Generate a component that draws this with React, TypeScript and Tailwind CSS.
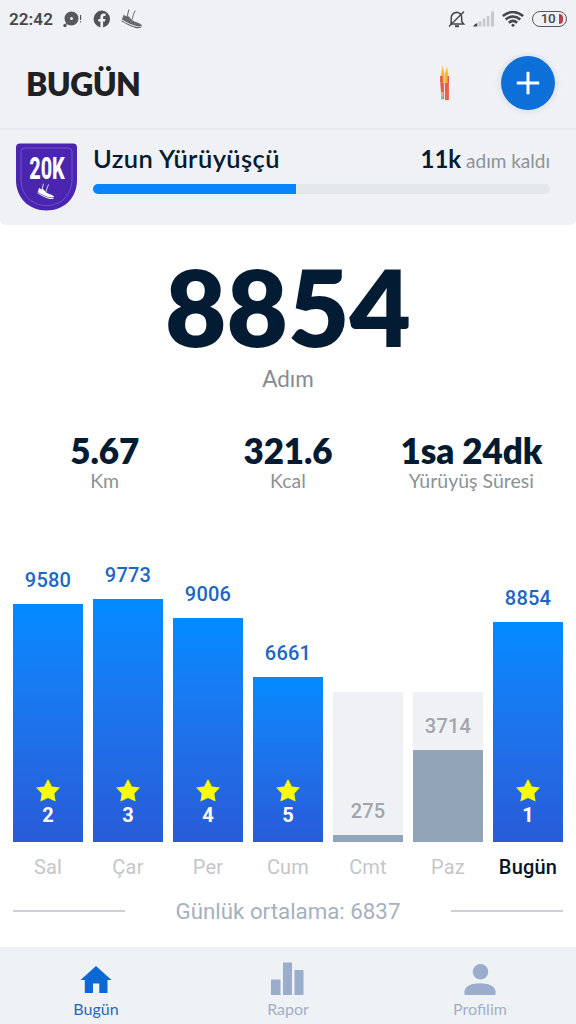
const DAILY_GOAL = 6000
const PX_PER_STEP = 0.02482

const stats = [
  { value: "5.67", label: "Km" },
  { value: "321.6", label: "Kcal" },
  { value: "1sa 24dk", label: "Yürüyüş Süresi" },
]

const days = [
  { name: "Sal", steps: 9580, streak: 2 },
  { name: "Çar", steps: 9773, streak: 3 },
  { name: "Per", steps: 9006, streak: 4 },
  { name: "Cum", steps: 6661, streak: 5 },
  { name: "Cmt", steps: 275 },
  { name: "Paz", steps: 3714 },
  { name: "Bugün", steps: 8854, streak: 1, today: true },
]

type Day = { name: string; steps: number; streak?: number; today?: boolean }

function Shoe({ className }: { className: string }) {
  return (
    <svg viewBox="0 0 22 20" className={className} fill="currentColor">
      <path d="M2.8 5.5 C4.5 7.4 6.4 7.8 7.8 7.2 C9.8 10 12 12.2 15 13 C17.7 13.8 20.3 14.8 21 16.8 L17.2 17.4 C11.5 16.4 6 13.9 .9 10.6 Z" />
      <path d="M.7 11.2 C6 14.6 11 17.2 17 18 L21 17.6 C20.2 19.3 17 19.5 14.5 18.9 C10 17.6 5 15 .5 12.2 Z" />
      <path d="M7.8 .5 L6 8.5 M14.2 1.5 C12.4 5 11.5 8 11.2 10.5" fill="none" stroke="currentColor" strokeWidth="1" />
    </svg>
  )
}

function StatusBar() {
  return (
    <div className="flex h-10 items-center justify-between pl-[9px] pr-[9px] text-[#45474b]">
      <div className="flex items-center">
        <span className="-mt-px w-[54px] font-[Roboto] text-[17px] font-semibold leading-none tracking-[0.1px]">22:42</span>
        <svg viewBox="0 0 20 20" className="-mt-px h-5 w-5 text-[#56585b]" fill="currentColor">
          <path fillRule="evenodd" d="M8.5 1.5a7 7 0 1 1 0 14A7 7 0 0 1 8.5 1.5Zm0 5.5a1.5 1.5 0 1 0 0 3 1.5 1.5 0 0 0 0-3Z" />
          <circle cx="2" cy="15.5" r="1.7" />
          <path d="M3.6 11.5 L2.6 14 L6 14.8 Z" />
          <path d="M17 5h1.2v5H17zM17 11.2h1.2v1.4H17z" />
        </svg>
        <svg viewBox="0 0 18 18" className="-mt-[2px] ml-[10px] h-[18px] w-[18px] text-[#505256]" fill="currentColor">
          <path d="M9 .4a8.6 8.6 0 0 0-1.6 17v-6H5.3V8.9h2.1V7.1c0-2.3 1.3-3.5 3.3-3.5l1.8.2v2.1h-1.1c-1 0-1.3.6-1.3 1.3v1.7h2.3l-.4 2.5h-1.9v6A8.6 8.6 0 0 0 9 .4Z" />
        </svg>
        <Shoe className="-mt-[3px] ml-[10px] h-[20px] w-[22px] text-[#66686b]" />
      </div>
      <div className="flex items-center">
        <svg viewBox="0 0 18 18" className="-mt-[2px] h-[18px] w-[18px]" fill="none" stroke="currentColor" strokeWidth="1.5">
          <path d="M3.2 13.5V8c0-3 2.1-5.2 5.5-5.8 3 .5 5 2.7 5 5.8v3.5l2 2.5H2" />
          <path d="M16 1.5 L1 16.5" />
          <path d="M7 16.2h4" strokeWidth="2" />
        </svg>
        <svg viewBox="0 0 22 16" className="-mt-[2px] ml-[7px] h-4 w-[22px]">
          <path d="M0 15.5 Q1 13 4.3 12 V15.5Z" fill="#45474b" />
          <path d="M5.5 15.5V10.5h3v5ZM9.8 15.5V7.5h2.5v8ZM13.8 15.5V5h2.6v10.5ZM18 15.5V.5h3v15Z" fill="#c5c7cb" />
        </svg>
        <svg viewBox="0 0 22 16" className="-mt-[2px] ml-[7px] h-4 w-[22px]" fill="none" stroke="currentColor" strokeWidth="2.5">
          <path d="M.8 5 Q11-3 21.2 5" />
          <path d="M3.7 8.4 Q11 2.6 18.3 8.4" />
          <path d="M6.8 11.8 Q11 8 15.2 11.8" />
          <circle cx="11" cy="14.3" r="1.5" fill="currentColor" stroke="none" />
        </svg>
        <div className="-mt-[2px] ml-2 flex h-4 w-[35px] items-center justify-end rounded-full border-[1.5px] border-[#55565b] pr-[3px]">
          <span className="mr-[4px] font-[Roboto] text-[13.5px] font-medium leading-none tracking-[-0.6px]">10</span>
          <span className="h-[10px] w-1 rounded-r-full bg-[#bd3b45]" />
        </div>
      </div>
    </div>
  )
}

function Header() {
  return (
    <header className="flex h-[88px] items-center justify-between pl-[26px] pr-[21px]">
      <h1 className="text-[32px] font-extrabold leading-none tracking-[-0.6px] text-[#202124]">BUGÜN</h1>
      <div className="flex items-center">
        <svg viewBox="0 0 10 36" className="-mt-[3px] mr-[51px] h-9 w-[10px]">
          <path d="M.3 11h3.8v23.3H1.4V31L.3 20ZM5 11h3.9v24H5Z" fill="#ed6045" />
          <path d="M.3 11h3.8v6H.3ZM5 11h3.9v6H5Z" fill="#e45655" />
          <path d="M2.6.5 L4.4 9 V18 H2.7 V11 H.8 ZM7 2 L8.3 9 V11 H7.5 V18 H4.8 V9Z" fill="#fbb633" />
          <path d="M1.4 27h2v4h-2Z" fill="#eeb0a0" />
          <path d="M1.5 31h2v3h-2Z" fill="#a9a6a2" />
        </svg>
        <button className="-mt-[2px] flex h-[54px] w-[54px] items-center justify-center rounded-full bg-[#0d6fd8] shadow-[0_0_0_3px_#e5e8ed,0_1px_5px_3px_#e5e8ed]">
          <svg viewBox="0 0 24 24" className="h-6 w-6" stroke="#fff" strokeWidth="3">
            <path d="M12 .8v22.4M.8 12h22.4" />
          </svg>
        </button>
      </div>
    </header>
  )
}

function Badge() {
  return (
    <div className="relative h-[68px] w-[61px] shrink-0">
      <svg viewBox="0 0 61 68" className="h-full w-full">
        <path d="M4 .5H57Q61 .5 61 4.5V37C61 55 48 67.5 30.5 67.5S0 55 0 37V4.5Q0 .5 4 .5Z" fill="#4925b0" />
        <path d="M8.5 5H52.5Q56 5 56 8.5V36C56 52 45 62.5 30.5 62.5S5 52 5 36V8.5Q5 5 8.5 5Z" fill="none" stroke="#7052cf" />
      </svg>
      <span className="absolute left-1/2 top-[10px] origin-center -translate-x-1/2 scale-x-[0.64] font-[Roboto] text-[31px] font-extrabold leading-none text-white">20K</span>
      <Shoe className="absolute left-[21px] top-[39px] h-[19px] w-[18px] text-white" />
    </div>
  )
}

function Challenge() {
  return (
    <section className="flex h-[97px] rounded-b-[5px] border-t-2 border-[#e8eaee] bg-[#f0f1f5] pl-4 pr-[26px] pt-[13px]">
      <Badge />
      <div className="ml-4 flex-1">
        <div className="-mt-px flex h-[32px] items-baseline justify-between leading-8">
          <span className="text-[25.5px] font-semibold tracking-[0.4px] text-[#031b31]">Uzun Yürüyüşçü</span>
          <span className="text-[19px] text-[#8c9199]">
            <b className="text-[24px] font-bold text-[#031b31]">11k</b> adım kaldı
          </span>
        </div>
        <div className="mt-[10px] h-[10px] overflow-hidden rounded-full bg-[#e4e7e9]">
          <div className="h-full w-[203px] bg-[#0a84fa]" />
        </div>
      </div>
    </section>
  )
}

function DayColumn({ name, steps, streak, today }: Day) {
  const reached = steps >= DAILY_GOAL
  const height = Math.round(steps * PX_PER_STEP)

  return (
    <div className="flex w-[70px] flex-col items-center">
      <div className="grid h-[291px] w-full items-end">
        {!reached && <div className="col-start-1 row-start-1 h-[150px] bg-[#f0f1f5]" />}
        <div className="col-start-1 row-start-1">
          <div className={`mb-[12px] text-center text-[20px] font-medium leading-6 tracking-[0.2px] ${reached ? "text-[#1b67c7]" : "text-[#a0a5ae]"}`}>
            {steps}
          </div>
          <div
            className={reached ? "flex flex-col items-center justify-end bg-linear-to-b from-[#008aff] to-[#285bd8] pb-[15px]" : "bg-[#92a4b8]"}
            style={{ height }}
          >
            {reached && (
              <>
                <svg viewBox="0 0 24 23" className="mb-[2px] h-[23px] w-6" fill="#fbff00">
                  <path d="M12 0 L15.9 7.5 L24 8.6 L18.3 14.4 L19.6 22.6 L12 18.9 L4.4 22.6 L5.7 14.4 L0 8.6 L8.1 7.5Z" />
                </svg>
                <span className="text-[20px] font-bold leading-[23px] text-white">{streak}</span>
              </>
            )}
          </div>
        </div>
      </div>
      <span className={`mt-[13px] text-[20px] leading-6 tracking-[0.2px] ${today ? "font-medium text-[#071526]" : "text-[#c4c6c9]"}`}>{name}</span>
    </div>
  )
}

function BottomNav() {
  return (
    <nav className="grid h-[77px] grid-cols-3 bg-[#eff2f5] text-[16px] leading-5 text-[#a1afc8]">
      <div className="flex flex-col items-center pt-[14px] text-[#1f68bb]">
        <svg viewBox="0 0 32 38" className="h-[38px] w-8" fill="#0c68d5">
          <path d="M16 5 L31.5 19 H27.5 V32 H19.3 V22.5 H13 V32 H4.8 V19 H.5Z" />
        </svg>
        <span>Bugün</span>
      </div>
      <div className="flex flex-col items-center pt-[14px]">
        <svg viewBox="0 0 34 38" className="h-[38px] w-[34px]" fill="#9aadcd">
          <path d="M0 18.5h9.5V34H0ZM12 1.5h9V34h-9ZM23.5 9h9v25h-9Z" />
        </svg>
        <span>Rapor</span>
      </div>
      <div className="flex flex-col items-center pt-[14px]">
        <svg viewBox="0 0 32 38" className="h-[38px] w-8" fill="#9aadcd">
          <circle cx="16.5" cy="10.7" r="7.7" />
          <path d="M.5 34v-4C1 25 8 22.3 16 22.3S31 25 31.5 30v4Z" />
        </svg>
        <span>Profilim</span>
      </div>
    </nav>
  )
}

export default function App() {
  return (
    <div className="flex h-[1024px] w-[576px] flex-col overflow-hidden bg-white font-[Lato,sans-serif]">
      <div className="bg-[#f0f1f5]">
        <StatusBar />
        <Header />
      </div>
      <Challenge />

      <section className="flex h-[200px] flex-col items-center pt-[28px]">
        <div className="text-[106px] font-extrabold leading-[106px] text-[#031c34]">8854</div>
        <div className="mt-[6px] text-[22.5px] leading-7 text-[#878c92]">Adım</div>
      </section>

      <section className="grid h-[125px] grid-cols-3 px-[13px] pt-1 text-center">
        {stats.map((stat) => (
          <div key={stat.label}>
            <div className="text-[35px] font-extrabold leading-[42px] tracking-[-0.1px] text-[#031b31]">{stat.value}</div>
            <div className="-mt-[2px] text-[19.5px] leading-6 text-[#8c9197]">{stat.label}</div>
          </div>
        ))}
      </section>

      <section className="flex flex-1 flex-col font-[Roboto,sans-serif]">
        <div className="flex justify-between px-[13px] pt-px">
          {days.map((day) => (
            <DayColumn key={day.name} {...day} />
          ))}
        </div>
        <div className="mt-[18px] flex items-center justify-between px-[13px] text-[22.3px] leading-7 text-[#a7b0bf]">
          <span className="h-[1.5px] w-[112px] bg-[#cdced2]" />
          Günlük ortalama: 6837
          <span className="h-[1.5px] w-[112px] bg-[#cdced2]" />
        </div>
      </section>
      <BottomNav />
    </div>
  )
}
